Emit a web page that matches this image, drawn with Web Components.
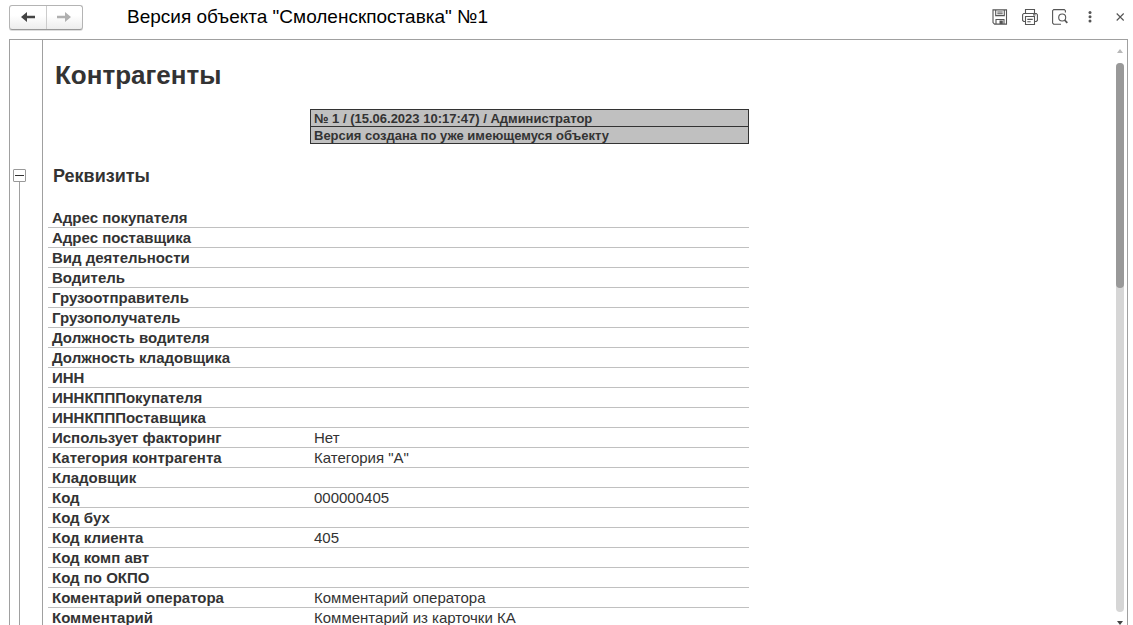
<!DOCTYPE html>
<html lang="ru">
<head>
<meta charset="utf-8">
<title>Версия объекта "Смоленскпоставка" №1</title>
<style>
html, body { height: 100%; }
body { margin: 0; overflow: hidden; background: #fff; color: #333; font-family: "Liberation Sans", Arial, sans-serif; }
</style>
</head>
<body>
<version-window>
  <window-header slot="header">Версия объекта "Смоленскпоставка" №1</window-header>
  <outline-gutter slot="gutter"></outline-gutter>
  <version-report slot="report"></version-report>
  <scroll-rail slot="scroll"></scroll-rail>
</version-window>
<script>
class ShadowElement extends HTMLElement {
  constructor() {
    super();
    this.attachShadow({ mode: "open" }).innerHTML = this.constructor.markup;
  }
}

customElements.define("version-window", class extends ShadowElement {
  static markup = `
    <style>
      :host { display: flex; flex-direction: column; height: 100vh; overflow: hidden; }
      main { flex: 1; min-height: 0; display: flex; margin: 0 5px 0 9px; border: 1px solid #a0a0a0; border-bottom: 0; overflow: hidden; }
      .sheet { flex: 1; min-width: 0; overflow: hidden; }
    </style>
    <slot name="header"></slot>
    <main>
      <slot name="gutter"></slot>
      <div class="sheet"><slot name="report"></slot></div>
      <slot name="scroll"></slot>
    </main>`;
});

customElements.define("window-header", class extends ShadowElement {
  static markup = `
    <style>
      :host { display: block; flex: none; }
      header { display: flex; align-items: center; height: 34px; padding: 0 0 5px 9px; }
      h1 { flex: 1; margin: 0 0 0 44px; font-size: 19px; font-weight: 400; line-height: 24px; color: #000; white-space: nowrap; }
    </style>
    <header>
      <history-nav></history-nav>
      <h1><slot></slot></h1>
      <window-tools></window-tools>
    </header>`;
});

customElements.define("history-nav", class extends ShadowElement {
  static markup = `
    <style>
      :host { display: block; flex: none; }
      nav { display: flex; box-sizing: border-box; width: 74px; height: 25px; border: 1px solid #b4b4b4; border-bottom-color: #999; border-radius: 3px; background: linear-gradient(#fff 40%, #ededed); box-shadow: 0 1px 0 #ddd; }
      button { flex: 1; display: flex; align-items: center; justify-content: center; padding: 0; border: 0; background: none; color: #444; }
      button + button { border-left: 1px solid #ccc; color: #b0b0b0; }
      svg { display: block; }
    </style>
    <nav aria-label="История">
      <button type="button" aria-label="Назад"><svg width="14" height="10" viewBox="0 0 14 10"><path fill="currentColor" d="M0 5 6 0v3.7h8v2.6H6V10z"/></svg></button>
      <button type="button" aria-label="Вперед"><svg width="14" height="10" viewBox="0 0 14 10"><path fill="currentColor" d="M14 5 8 0v3.7H0v2.6h8V10z"/></svg></button>
    </nav>`;
});

customElements.define("window-tools", class extends ShadowElement {
  static markup = `
    <style>
      :host { display: flex; flex: none; gap: 4px; }
      button { display: flex; align-items: center; justify-content: center; width: 26px; height: 24px; padding: 0; border: 0; background: none; color: #555; }
      svg { display: block; fill: none; stroke: currentColor; stroke-width: 1.1; }
    </style>
    <button type="button" aria-label="Сохранить"><svg width="16" height="16" viewBox="0 0 16 16"><path d="M1.5.9h13v14.2H2.6L1 13.6V.9zM3.7 1v5.6h8.6V1M5.3 3h5.4M5.3 4.8h5.4M4 15v-4.5h8V15"/><path fill="currentColor" stroke="none" d="M7.5 11.5h3.3V15H7.5z"/></svg></button>
    <button type="button" aria-label="Печать"><svg width="16" height="16" viewBox="0 0 16 16"><path d="M3.5 4.5v-4h9v4M3.5 12.5H1.7L.6 11.4V5.7l1.1-1.2h12.6l1.1 1.2v5.7l-1.1 1.1h-1.8M3.5 7.5h9v8h-9zM5.3 10.4h5.4M5.3 12.8h3.4M11 5.9h2.6"/></svg></button>
    <button type="button" aria-label="Предварительный просмотр"><svg width="16" height="16" viewBox="0 0 16 16"><path d="M13.4 3.6V1.7L12.3.6H1.7L.6 1.7v12.4l1.1 1.1H9"/><circle cx="10.2" cy="8.5" r="3.5"/><path stroke-width="1.8" d="m12.6 11 2.7 2.8"/></svg></button>
    <button type="button" aria-label="Ещё"><svg width="16" height="16" viewBox="0 0 16 16"><g fill="currentColor" stroke="none"><circle cx="8" cy="3.5" r="1.5"/><circle cx="8" cy="7.8" r="1.5"/><circle cx="8" cy="12.1" r="1.5"/></g></svg></button>
    <button type="button" aria-label="Закрыть"><svg width="16" height="16" viewBox="0 0 16 16"><path d="m4.7 4.5 7 7m0-7-7 7"/></svg></button>`;
});

customElements.define("outline-gutter", class extends ShadowElement {
  static markup = `
    <style>
      :host { flex: none; display: flex; flex-direction: column; width: 32px; padding-top: 129px; border-right: 1px solid #a0a0a0; }
      button { flex: none; display: flex; align-items: center; justify-content: center; box-sizing: border-box; width: 13px; height: 13px; margin-left: 3px; padding: 0; border: 1px solid #999; border-radius: 1px; background: #fff; }
      button::before { content: ""; width: 9px; height: 1px; background: #333; }
      .line { flex: 1; width: 1px; margin-left: 9px; background: #a0a0a0; }
    </style>
    <button type="button" aria-label="Свернуть группу" aria-expanded="true"></button>
    <div class="line"></div>`;
});

customElements.define("version-report", class extends ShadowElement {
  static markup = `
    <style>
      :host { display: block; padding: 19px 0 0 5px; }
      h2 { margin: 0 0 0 7px; font-size: 26px; line-height: 32px; }
      h3 { margin: 20px 0 20px 5px; font-size: 18px; line-height: 24px; }
      table { border-collapse: collapse; table-layout: fixed; }
      th, td { text-align: left; white-space: nowrap; }
      .version { width: 439px; margin: 18px 0 0 262px; background: #c0c0c0; }
      .version th { height: 17px; padding: 2px 0 0 3px; box-sizing: border-box; border: 1px solid #333; font-size: 13px; line-height: 14px; }
      .fields { width: 701px; border-collapse: separate; border-spacing: 0; font-size: 15px; }
      .fields th { width: 262px; }
      .fields th, .fields td { height: 20px; padding: 0 0 0 4px; box-sizing: border-box; border-bottom: 1px solid #c0c0c0; line-height: 19px; }
    </style>
    <h2>Контрагенты</h2>
    <table class="version"><tbody>
      <tr><th>№ 1 / (15.06.2023 10:17:47) / Администратор</th></tr>
      <tr><th>Версия создана по уже имеющемуся объекту</th></tr>
    </tbody></table>
    <h3>Реквизиты</h3>
    <table class="fields"><tbody></tbody></table>`;

  static fields = [
    ["Адрес покупателя"], ["Адрес поставщика"], ["Вид деятельности"], ["Водитель"],
    ["Грузоотправитель"], ["Грузополучатель"], ["Должность водителя"], ["Должность кладовщика"],
    ["ИНН"], ["ИННКПППокупателя"], ["ИННКПППоставщика"], ["Использует факторинг", "Нет"],
    ["Категория контрагента", "Категория \"А\""], ["Кладовщик"], ["Код", "000000405"],
    ["Код бух"], ["Код клиента", "405"], ["Код комп авт"], ["Код по ОКПО"],
    ["Коментарий оператора", "Комментарий оператора"], ["Комментарий", "Комментарий из карточки КА"]
  ];

  connectedCallback() {
    const body = this.shadowRoot.querySelector(".fields tbody");
    body.replaceChildren();
    for (const [name, value = ""] of this.constructor.fields) {
      const row = body.insertRow();
      const head = document.createElement("th");
      head.scope = "row";
      head.textContent = name;
      row.append(head);
      row.insertCell().textContent = value;
    }
  }
});

customElements.define("scroll-rail", class extends ShadowElement {
  static markup = `
    <style>
      :host { flex: none; display: flex; flex-direction: column; align-items: center; width: 8px; padding: 9px 3px 0 0; }
      svg { flex: none; display: block; }
      .track { flex: 1; width: 8px; margin: 9px 0; border-radius: 4px; background: #d6d6d6; }
      .thumb { height: 41%; border-radius: 4px; background: #999; }
    </style>
    <svg width="6" height="5" viewBox="0 0 6 5"><path fill="#b8b8b8" d="M0 4 3 0l3 4z"/></svg>
    <div class="track"><div class="thumb"></div></div>
    <svg width="6" height="4" viewBox="0 0 6 4"><path fill="#444" d="M0 0h6L3 4z"/></svg>`;
});
</script>
</body>
</html>
